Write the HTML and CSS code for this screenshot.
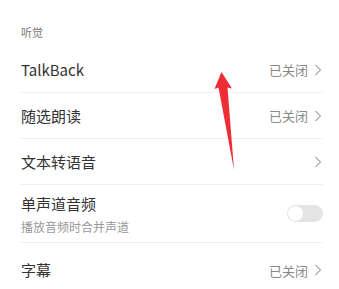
FILE: index.html
```html
<!DOCTYPE html>
<html>
<head>
<meta charset="utf-8">
<link rel="stylesheet" href="styles.css">
</head>
<body>
<div class="page">
  <div class="section-title">听觉</div>
  <div class="row">
    <div class="label">TalkBack</div>
    <div class="value">已关闭<span class="chev"><svg width="8" height="12" viewBox="0 0 8 12"><path d="M1.5 1 L6.5 6 L1.5 11" fill="none" stroke="#aaa" stroke-width="1.2"/></svg></span></div>
  </div>
  <div class="row">
    <div class="label">随选朗读</div>
    <div class="value">已关闭<span class="chev"><svg width="8" height="12" viewBox="0 0 8 12"><path d="M1.5 1 L6.5 6 L1.5 11" fill="none" stroke="#aaa" stroke-width="1.2"/></svg></span></div>
  </div>
  <div class="row">
    <div class="label">文本转语音</div>
    <div class="value"><span class="chev"><svg width="8" height="12" viewBox="0 0 8 12"><path d="M1.5 1 L6.5 6 L1.5 11" fill="none" stroke="#aaa" stroke-width="1.2"/></svg></span></div>
  </div>
  <div class="row tall">
    <div class="texts">
      <div class="label">单声道音频</div>
      <div class="sub">播放音频时合并声道</div>
    </div>
    <div class="toggle"><span class="knob"></span></div>
  </div>
  <div class="row last">
    <div class="label">字幕</div>
    <div class="value">已关闭<span class="chev"><svg width="8" height="12" viewBox="0 0 8 12"><path d="M1.5 1 L6.5 6 L1.5 11" fill="none" stroke="#aaa" stroke-width="1.2"/></svg></span></div>
  </div>
  <svg class="arrow" width="339" height="289" viewBox="0 0 339 289">
    <polygon points="221.5,72 214.5,89 218.5,87.5 234,170 227.5,87.5 232,88.5" fill="#ee2d35"/>
  </svg>
</div>
</body>
</html>
```
FILE: styles.css
```css
html, body {
  margin: 0;
  padding: 0;
  background: #ffffff;
}
.page {
  position: relative;
  width: 339px;
  height: 289px;
  overflow: hidden;
  font-family: "Noto Sans CJK SC", "Noto Sans", sans-serif;
  color: #333333;
}
.section-title {
  box-sizing: border-box;
  height: 47px;
  padding: 23px 0 0 21px;
  font-size: 11px;
  line-height: 18px;
  color: #777777;
}
.row {
  box-sizing: border-box;
  height: 46px;
  margin: 0 16px 0 20px;
  padding: 0 0 0 1px;
  display: flex;
  align-items: center;
  justify-content: space-between;
  border-bottom: 1px solid #f0f0f0;
}
.row.tall {
  height: 58px;
  padding-top: 2px;
}
.row.last {
  height: 54px;
  border-bottom: none;
}
.label {
  font-size: 15px;
  line-height: 20px;
  color: #333333;
}
.sub {
  font-size: 12px;
  line-height: 16px;
  color: #999999;
  margin-top: 5px;
}
.value {
  display: flex;
  align-items: center;
  font-size: 13px;
  color: #888888;
}
.chev {
  display: flex;
  margin-left: 6px;
  margin-right: 1px;
}
.toggle {
  position: relative;
  width: 36px;
  height: 17px;
  border-radius: 9px;
  background: #e4e4e4;
  margin-top: -2px;
}
.knob {
  position: absolute;
  left: 1px;
  top: 1px;
  width: 15px;
  height: 15px;
  border-radius: 50%;
  background: #ffffff;
}
.arrow {
  position: absolute;
  left: 0;
  top: 0;
  pointer-events: none;
}
```
